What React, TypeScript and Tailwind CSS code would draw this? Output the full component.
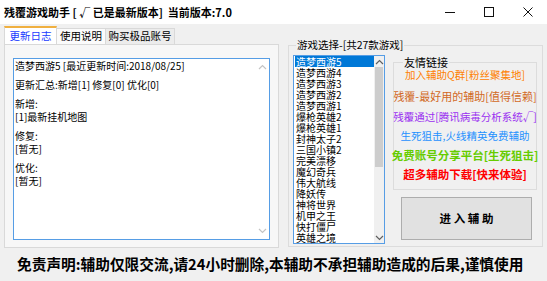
import React from "react";

const games = [
  "造梦西游5",
  "造梦西游4",
  "造梦西游3",
  "造梦西游2",
  "造梦西游1",
  "爆枪英雄2",
  "爆枪英雄1",
  "封神太子2",
  "三国小镇2",
  "完美漂移",
  "魔幻奇兵",
  "伟大航线",
  "降妖传",
  "神将世界",
  "机甲之王",
  "快打僵尸",
  "英雄之境",
];

const links = [
  { text: "加入辅助Q群[粉丝聚集地]", cls: "h-[21px] text-[10.5px] text-[#ff8000]" },
  { text: "残覆-最好用的辅助[值得信赖]", cls: "h-[21px] text-[11px] text-[#d2691e]" },
  { text: "残覆通过[腾讯病毒分析系统√]", cls: "h-[20px] text-[10.5px] text-[#9a2ff0]" },
  { text: "生死狙击,火线精英免费辅助", cls: "h-[19px] text-[10.5px] text-[#1e90ff]" },
  { text: "免费账号分享平台[生死狙击]", cls: "h-[19px] text-[11.5px] font-bold text-[#66cc00]" },
  { text: "超多辅助下载[快来体验]", cls: "h-[19px] text-[11.5px] font-bold text-[#ff0000]" },
];

/* chevron used by the two scrollbars */
function Chevron({ up, color }: { up?: boolean; color: string }) {
  return (
    <svg width="9" height="6" viewBox="0 0 9 6" fill="none">
      <path
        d={up ? "M1 5 L4.5 1.5 L8 5" : "M1 1 L4.5 4.5 L8 1"}
        stroke={color}
        strokeWidth="1.2"
      />
    </svg>
  );
}

export default function App() {
  return (
    <div className="w-[547px] h-[281px] bg-[#f0f0f0] flex flex-col overflow-hidden font-['Noto_Sans_CJK_SC',sans-serif] text-black">
      {/* TITLE BAR */}
      <div className="h-[24px] bg-white flex items-center shrink-0">
        <span className="pl-[4px] text-[11px] font-bold leading-none whitespace-nowrap">
          残覆游戏助手 [ √ 已是最新版本]&nbsp;&nbsp;当前版本:7.0
        </span>
        <div className="ml-auto flex h-full">
          <div className="w-[39px] h-full flex items-center justify-center">
            <svg width="10" height="10" viewBox="0 0 10 10">
              <path d="M0 5.5 H10" stroke="#111" strokeWidth="1" />
            </svg>
          </div>
          <div className="w-[39px] h-full flex items-center justify-center">
            <svg width="10" height="10" viewBox="0 0 10 10">
              <rect x="0.5" y="0.5" width="9" height="9" fill="none" stroke="#111" strokeWidth="1" />
            </svg>
          </div>
          <div className="w-[39px] h-full flex items-center justify-center">
            <svg width="10" height="10" viewBox="0 0 10 10">
              <path d="M0.5 0.5 L9.5 9.5 M9.5 0.5 L0.5 9.5" stroke="#111" strokeWidth="1" />
            </svg>
          </div>
        </div>
      </div>

      {/* MAIN */}
      <div className="h-[224px] flex shrink-0">
        {/* LEFT: TABS */}
        <div className="ml-[4px] pt-[2px] w-[275px] flex flex-col">
          <div className="h-[18px] flex items-end text-[10.5px] leading-none">
            <div className="w-[53px] h-[18px] bg-white border border-[#d9d9d9] border-b-0 border-t-2 border-t-[#f0b040] flex items-center justify-center text-[#1a3cff] relative z-10">
              更新日志
            </div>
            <div className="w-[49px] h-[16px] bg-[#fbfbfb] border border-[#d9d9d9] border-b-0 border-l-0 flex items-center justify-center">
              使用说明
            </div>
            <div className="w-[69px] h-[16px] bg-[#ececec] border border-[#d9d9d9] border-b-0 border-l-0 flex items-center justify-center">
              购买极品账号
            </div>
          </div>
          <div className="h-[204px] border border-[#d9d9d9] bg-[#f7f7f7] pt-[13px] pl-[8px]">
            <div className="w-[257px] h-[182px] border border-[#569de5] bg-white flex">
              <div className="flex-1 pl-[1px] text-[10px] leading-[13px] whitespace-nowrap">
                <div>造梦西游5 [最近更新时间:2018/08/25]</div>
                <div className="mt-[6px]">更新汇总:新增[1] 修复[0] 优化[0]</div>
                <div className="mt-[6px]">新增:</div>
                <div>[1]最新挂机地图</div>
                <div className="mt-[6px]">修复:</div>
                <div>[暂无]</div>
                <div className="mt-[6px]">优化:</div>
                <div>[暂无]</div>
              </div>
              <div className="w-[14px] flex flex-col items-center justify-between py-[5px]">
                <Chevron up color="#c4c4c4" />
                <Chevron color="#c4c4c4" />
              </div>
            </div>
          </div>
        </div>

        {/* RIGHT: GAME SELECT GROUP */}
        <div className="ml-[9px] mt-[21px] w-[255px] h-[202px] border border-[#dcdcdc] relative flex pl-[4px] pt-[9px]">
          <span className="absolute left-[7px] top-[-7px] px-[1px] bg-[#f0f0f0] text-[10.5px] leading-[12px] whitespace-nowrap">
            游戏选择-[共27款游戏]
          </span>

          {/* LIST BOX */}
          <div className="w-[92px] h-[189px] border border-[#569de5] bg-white flex">
            <div className="flex-1 flex flex-col pl-[1px] text-[10px] leading-[11px]">
              {games.map((g, i) => (
                <div
                  key={g}
                  className={
                    i === 0
                      ? "h-[11px] pl-[1px] bg-[#0078d7] text-white whitespace-nowrap"
                      : "h-[11px] pl-[1px] whitespace-nowrap"
                  }
                >
                  {g}
                </div>
              ))}
            </div>
            <div className="w-[10px] bg-[#f0f0f0] flex flex-col items-center">
              <div className="h-[11px] flex items-center">
                <Chevron up color="#606060" />
              </div>
              <div className="w-[8px] h-[100px] bg-[#cdcdcd]" />
              <div className="mt-auto h-[11px] flex items-center">
                <Chevron color="#606060" />
              </div>
            </div>
          </div>

          {/* LINKS + BUTTON */}
          <div className="ml-[8px] flex flex-col">
            <div className="mt-[7px] w-[144px] h-[128px] border border-[#dcdcdc] relative pt-[2px]">
              <span className="absolute left-[9px] top-[-7px] px-[1px] bg-[#f0f0f0] text-[11px] leading-[12px]">
                友情链接
              </span>
              <div className="flex flex-col">
                {links.map((l) => (
                  <div
                    key={l.text}
                    className={`${l.cls} flex items-center justify-center leading-none whitespace-nowrap`}
                  >
                    {l.text}
                  </div>
                ))}
              </div>
            </div>
            <button className="mt-[7px] ml-[8px] w-[131px] h-[43px] bg-[#e1e1e1] border border-[#adadad] text-[11.5px] font-bold leading-none whitespace-pre">
              进 入 辅 助
            </button>
          </div>
        </div>
      </div>

      {/* DISCLAIMER */}
      <div className="flex-1 flex items-center pl-[17px] text-[14.7px] font-bold leading-none whitespace-nowrap">
        免责声明:辅助仅限交流,请24小时删除,本辅助不承担辅助造成的后果,谨慎使用
      </div>
    </div>
  );
}
